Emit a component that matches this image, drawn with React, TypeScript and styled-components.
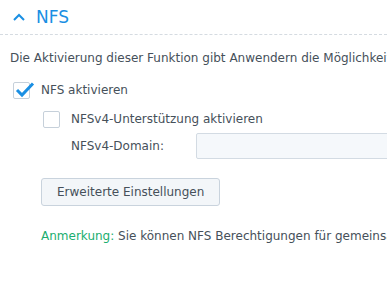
import React from 'react';
import styled, { createGlobalStyle } from 'styled-components';

const GlobalStyle = createGlobalStyle`
  body {
    margin: 0;
    background: #ffffff;
    font-family: "DejaVu Sans", Verdana, sans-serif;
    font-size: 12px;
    color: #46505a;
    overflow: hidden;
  }
`;

const Page = styled.div`
  width: 387px;
  height: 285px;
  overflow: hidden;
  white-space: nowrap;
`;

const Header = styled.div`
  display: flex;
  align-items: center;
  gap: 11px;
  height: 34px;
  padding-left: 13px;
  border-bottom: 1px dashed #d5dbe1;
  color: #1a8fe3;
  font-size: 17px;
`;

const Section = styled.div`
  padding: 15px 0 0 10px;
  display: flex;
  flex-direction: column;
`;

const Description = styled.div`
  height: 16px;
  line-height: 16px;
`;

const CheckRow = styled.label<{ indent?: number; top: number }>`
  display: flex;
  align-items: center;
  gap: 11px;
  margin-left: ${(p) => p.indent || 0}px;
  margin-top: ${(p) => p.top}px;
  height: 18px;
`;

const Box = styled.span`
  width: 17px;
  height: 17px;
  box-sizing: border-box;
  border: 1px solid #c6d0da;
  border-radius: 2px;
  background: #fff;
  position: relative;
  flex: none;
`;

const Tick = styled.svg`
  position: absolute;
  left: 0px;
  top: -4px;
`;

const FieldRow = styled.div`
  display: grid;
  grid-template-columns: 125px 230px;
  align-items: center;
  margin-left: 61px;
  margin-top: 5px;
  height: 26px;
`;

const FieldLabel = styled.span``;

const TextInput = styled.div`
  height: 26px;
  box-sizing: border-box;
  border: 1px solid #d3dbe3;
  border-radius: 2px;
  background: #f5f8fb;
`;

const Button = styled.button`
  align-self: flex-start;
  margin: 19px 0 0 31px;
  height: 28px;
  padding: 0 15px;
  font-family: inherit;
  font-size: 12px;
  color: #46505a;
  background: #f3f6f9;
  border: 1px solid #c9d3dd;
  border-radius: 3px;
`;

const Note = styled.div`
  margin: 22px 0 0 31px;
  height: 16px;
  line-height: 16px;
`;

const NoteLabel = styled.span`
  color: #1aae6f;
`;

function Checkbox({ checked }: { checked?: boolean }) {
  return (
    <Box>
      {checked && (
        <Tick width="21" height="20" viewBox="0 0 21 20">
          <path d="M3 11 L8 16 L19 4.5" fill="none" stroke="#1a8fe3" strokeWidth="3" />
        </Tick>
      )}
    </Box>
  );
}

export default function App() {
  return (
    <Page>
      <GlobalStyle />
      <Header>
        <svg width="12" height="8" viewBox="0 0 12 8">
          <path d="M1 7 L6 2 L11 7" fill="none" stroke="#1a8fe3" strokeWidth="2" />
        </svg>
        <span>NFS</span>
      </Header>
      <Section>
        <Description>
          Die Aktivierung dieser Funktion gibt Anwendern die Möglichkeit, über NFS auf Daten zuzugreifen.
        </Description>
        <CheckRow indent={3} top={15}>
          <Checkbox checked />
          <span>NFS aktivieren</span>
        </CheckRow>
        <CheckRow indent={33} top={11}>
          <Checkbox />
          <span>NFSv4-Unterstützung aktivieren</span>
        </CheckRow>
        <FieldRow>
          <FieldLabel>NFSv4-Domain:</FieldLabel>
          <TextInput />
        </FieldRow>
        <Button>Erweiterte Einstellungen</Button>
        <Note>
          <NoteLabel>Anmerkung:</NoteLabel> Sie können NFS Berechtigungen für gemeinsame Ordner festlegen.
        </Note>
      </Section>
    </Page>
  );
}
